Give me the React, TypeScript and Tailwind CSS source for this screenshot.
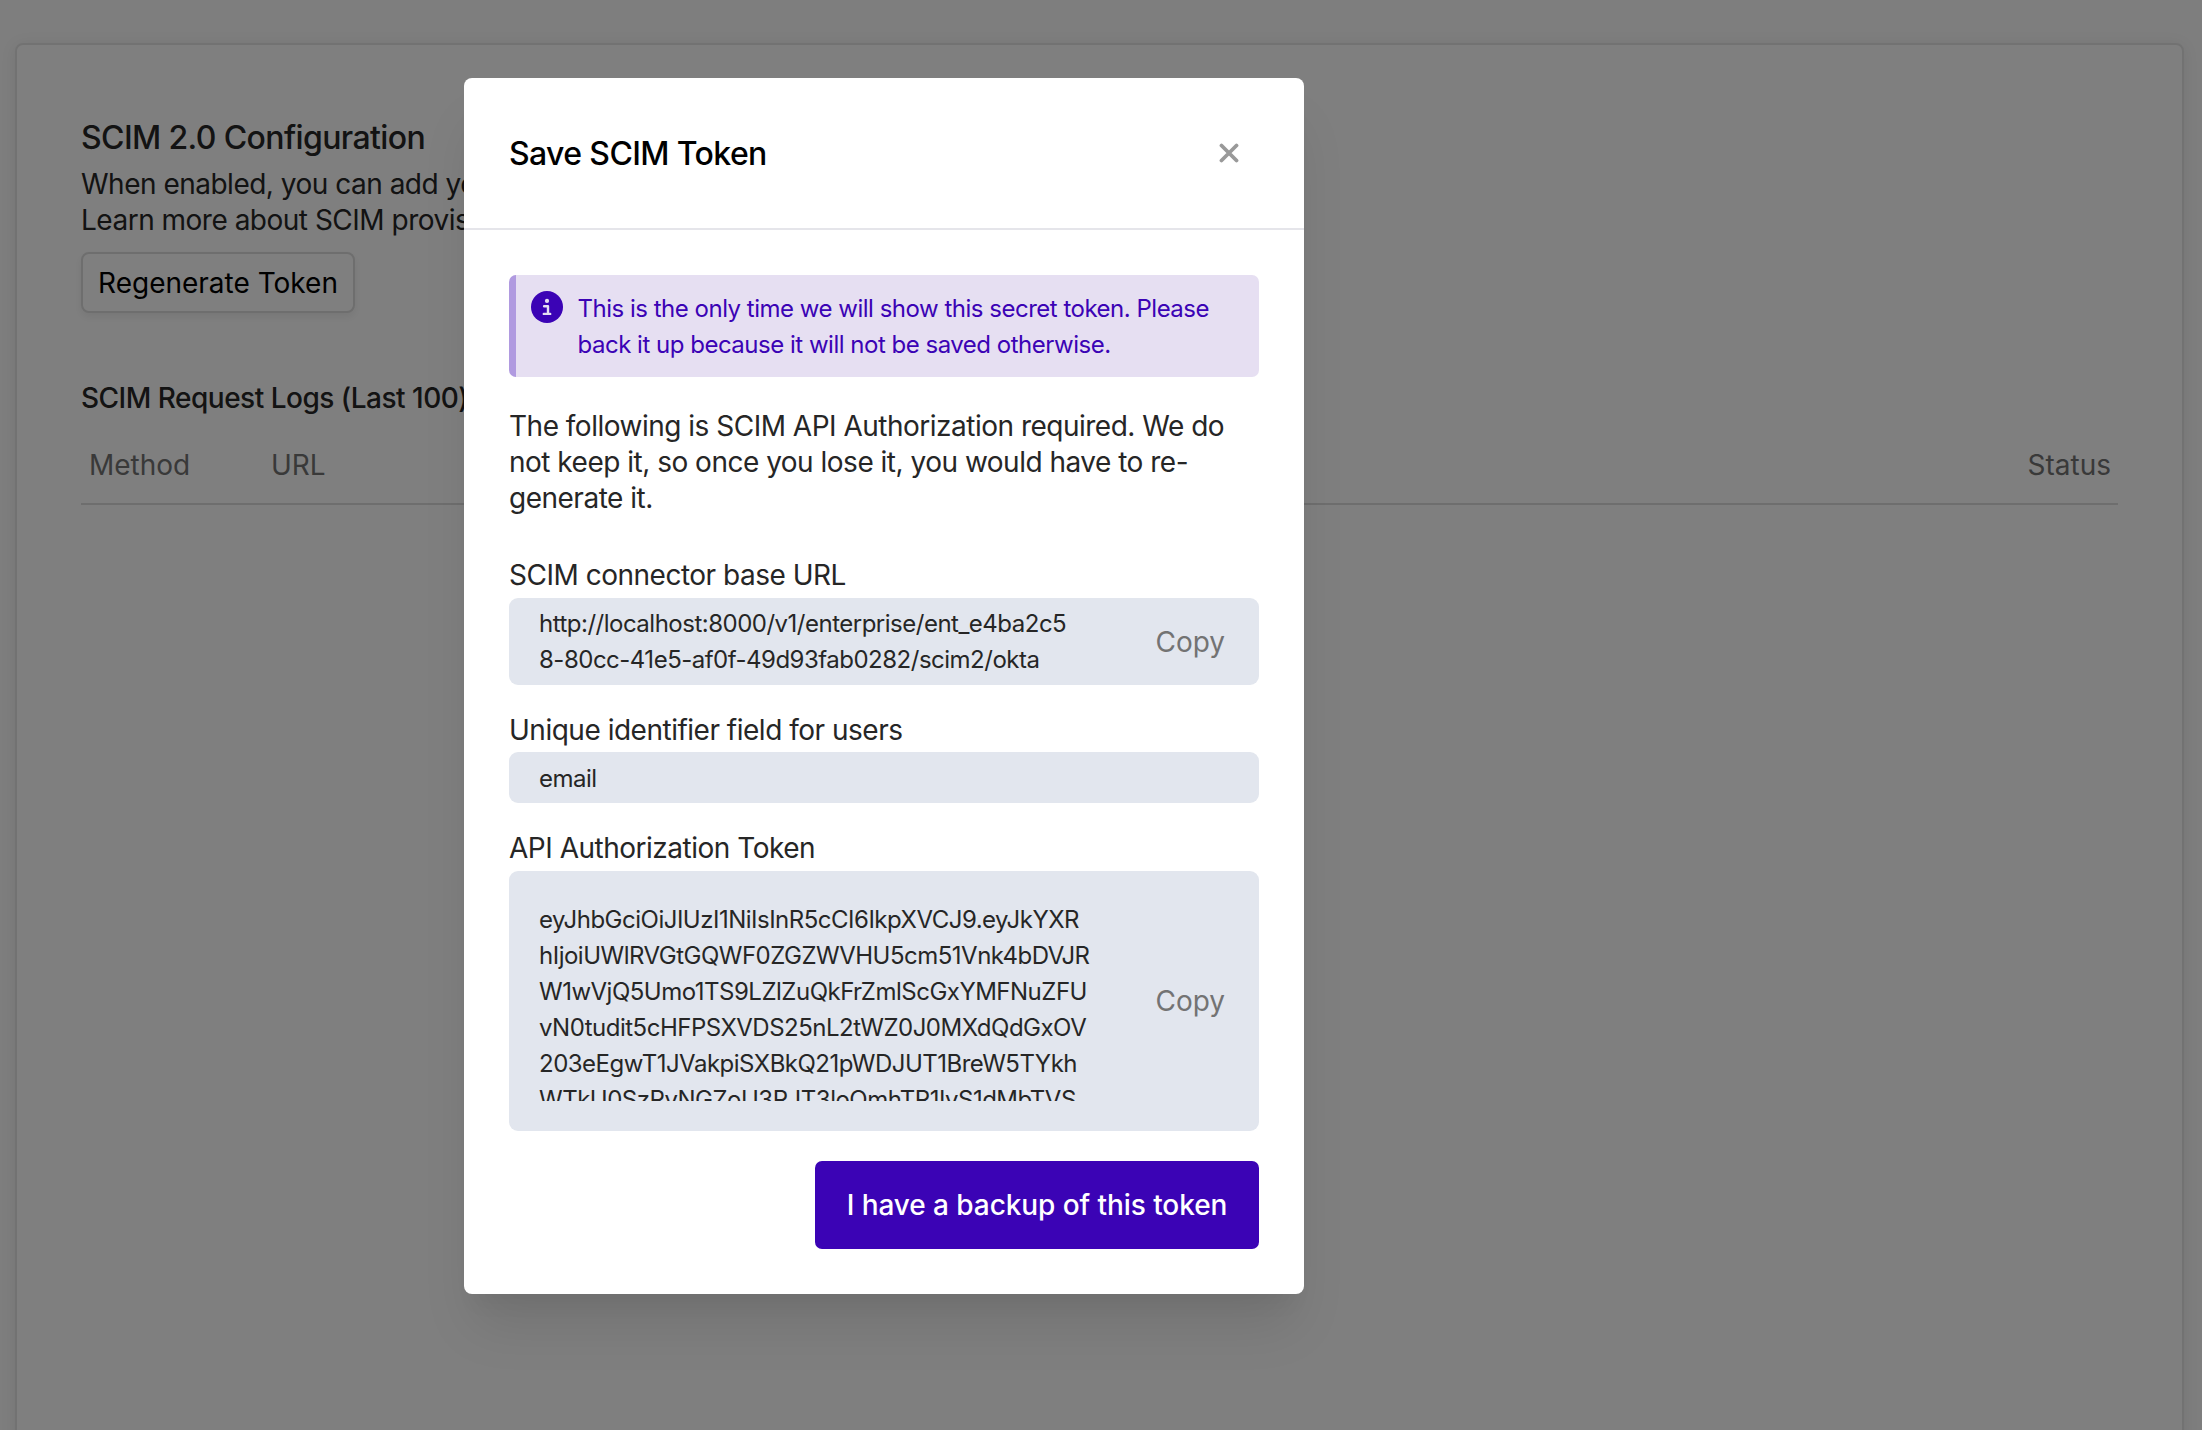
import type { ReactNode } from "react";

const tokenLines = [
  "eyJhbGciOiJIUzI1NiIsInR5cCI6IkpXVCJ9.eyJkYXR",
  "hIjoiUWlRVGtGQWF0ZGZWVHU5cm51Vnk4bDVJR",
  "W1wVjQ5Umo1TS9LZlZuQkFrZmlScGxYMFNuZFU",
  "vN0tudit5cHFPSXVDS25nL2tWZ0J0MXdQdGxOV",
  "203eEgwT1JVakpiSXBkQ21pWDJUT1BreW5TYkh",
  "WTkU0SzRvNGZoU3RJT3loQmhTR1IyS1dMbTVS",
];

function CopyButton() {
  return (
    <button className="mr-[34px] text-[28px] leading-9 tracking-normal text-[#737373]">Copy</button>
  );
}

function Field({ label, className, children }: { label: string; className: string; children: ReactNode }) {
  return (
    <div>
      <div className="text-[28px] leading-9 tracking-[-0.49px] text-[#262626]">{label}</div>
      <div
        className={
          "flex items-center justify-between rounded-[9px] bg-[#e2e6ee] pl-[30px] text-[24px] leading-9 tracking-[-0.5px] text-[#262626] " +
          className
        }
      >
        {children}
      </div>
    </div>
  );
}

function SettingsPage() {
  return (
    <div className="h-full px-[15px] pt-[43px]">
      <div className="mr-[3px] h-[1500px] rounded-[8px] border-2 border-[#e5e5e5] bg-white px-16 pt-[73px] shadow-[0_2px_16px_rgba(0,0,0,0.08)]">
        <h1 className="text-[32px] leading-10 font-medium tracking-[-0.62px]">SCIM 2.0 Configuration</h1>
        <p className="mt-[8px] text-[28px] leading-9 tracking-[-0.5px]">
          When enabled, you can add your users through SCIM.
          <br />
          Learn more about SCIM provisioning.
        </p>
        <button className="mt-[14px] flex h-[61px] w-[274px] items-center justify-center rounded-[8px] border-2 border-[#dcdcdc] bg-white text-[28px] leading-9 text-black shadow-[0_4px_8px_rgba(0,0,0,0.07)]">
          Regenerate Token
        </button>
        <h2 className="mt-[67px] text-[28px] leading-9 font-medium tracking-[-0.5px]">
          SCIM Request Logs (Last 100)
        </h2>
        <div className="mt-[31px] flex h-[58px] border-b-2 border-[#dcdcdc] pr-[7px] pl-[8px] text-[28px] leading-9 text-[#737373]">
          <div className="w-[182px]">Method</div>
          <div className="flex-1">URL</div>
          <div>Status</div>
        </div>
      </div>
    </div>
  );
}

function TokenDialog() {
  return (
    <div className="mt-[78px] ml-[464px] flex h-[1216px] w-[840px] flex-col rounded-[8px] bg-white shadow-[0_40px_50px_-10px_rgba(0,0,0,0.1),0_20px_20px_-10px_rgba(0,0,0,0.04)]">
      <div className="flex h-[152px] items-center justify-between border-b-2 border-[#e5e5ea] pr-[65px] pl-[45px]">
        <h2 className="pt-[2px] text-[32px] leading-10 font-medium tracking-[-0.62px] text-black">Save SCIM Token</h2>
        <button aria-label="Close">
          <svg width="20" height="20" viewBox="0 0 20 20" fill="none" stroke="#999999" strokeWidth="3.8" strokeLinecap="round">
            <path d="M2.5 2.5L17.5 17.5M17.5 2.5L2.5 17.5" />
          </svg>
        </button>
      </div>
      <div className="flex flex-col px-[45px] pt-[45px]">
        <div className="flex h-[102px] rounded-[7px] border-l-7 border-[#b09ae0] bg-[#e6dff2] pt-4 pl-[15px]">
          <svg className="shrink-0" width="32" height="32" viewBox="0 0 32 32">
            <circle cx="16" cy="16" r="16" fill="#3b03b5" />
            <circle cx="16" cy="9.9" r="2.1" fill="#e6dff2" />
            <path d="M13.1 15.2H17V22.8M12.8 22.9H19.2" fill="none" stroke="#e6dff2" strokeWidth="2.4" strokeLinecap="round" strokeLinejoin="round" />
          </svg>
          <p className="ml-[14.5px] text-[24px] leading-9 tracking-[-0.49px] text-[#3b03b5]">
            This is the only time we will show this secret token. Please
            <br />
            back it up because it will not be saved otherwise.
          </p>
        </div>
        <p className="mt-[31px] mb-[41px] text-[28px] leading-9 tracking-[-0.5px] text-[#262626]">
          The following is SCIM API Authorization required. We do
          <br />
          not keep it, so once you lose it, you would have to re-
          <br />
          generate it.
        </p>
        <div className="flex flex-col">
          <Field label="SCIM connector base URL" className="mt-[5px] mb-[27px] h-[87px]">
            <div>
              http://localhost:8000/v1/enterprise/ent_e4ba2c5
              <br />
              8-80cc-41e5-af0f-49d93fab0282/scim2/okta
            </div>
            <CopyButton />
          </Field>
          <Field label="Unique identifier field for users" className="mt-[4px] mb-[27px] h-[51px] pt-[2px]">
            email
          </Field>
          <Field label="API Authorization Token" className="mt-[5px] mb-[30px] h-[260px]">
            <div className="h-[200px] overflow-hidden pt-px">
              {tokenLines.map((line) => (
                <div key={line}>{line}</div>
              ))}
            </div>
            <CopyButton />
          </Field>
        </div>
        <button className="flex h-[88px] w-[444px] items-center justify-center self-end rounded-[7px] bg-[#3b03b5] text-[28px] leading-9 font-medium tracking-[-0.07px] text-white">
          I have a backup of this token
        </button>
      </div>
    </div>
  );
}

export default function App() {
  return (
    <div className="relative h-[1430px] w-[2202px] overflow-hidden bg-[#fcfcfc] font-[Inter,sans-serif] text-[#262626]">
      <SettingsPage />
      <div className="absolute inset-0 bg-black/50">
        <div className="flex">
          <TokenDialog />
        </div>
      </div>
    </div>
  );
}
